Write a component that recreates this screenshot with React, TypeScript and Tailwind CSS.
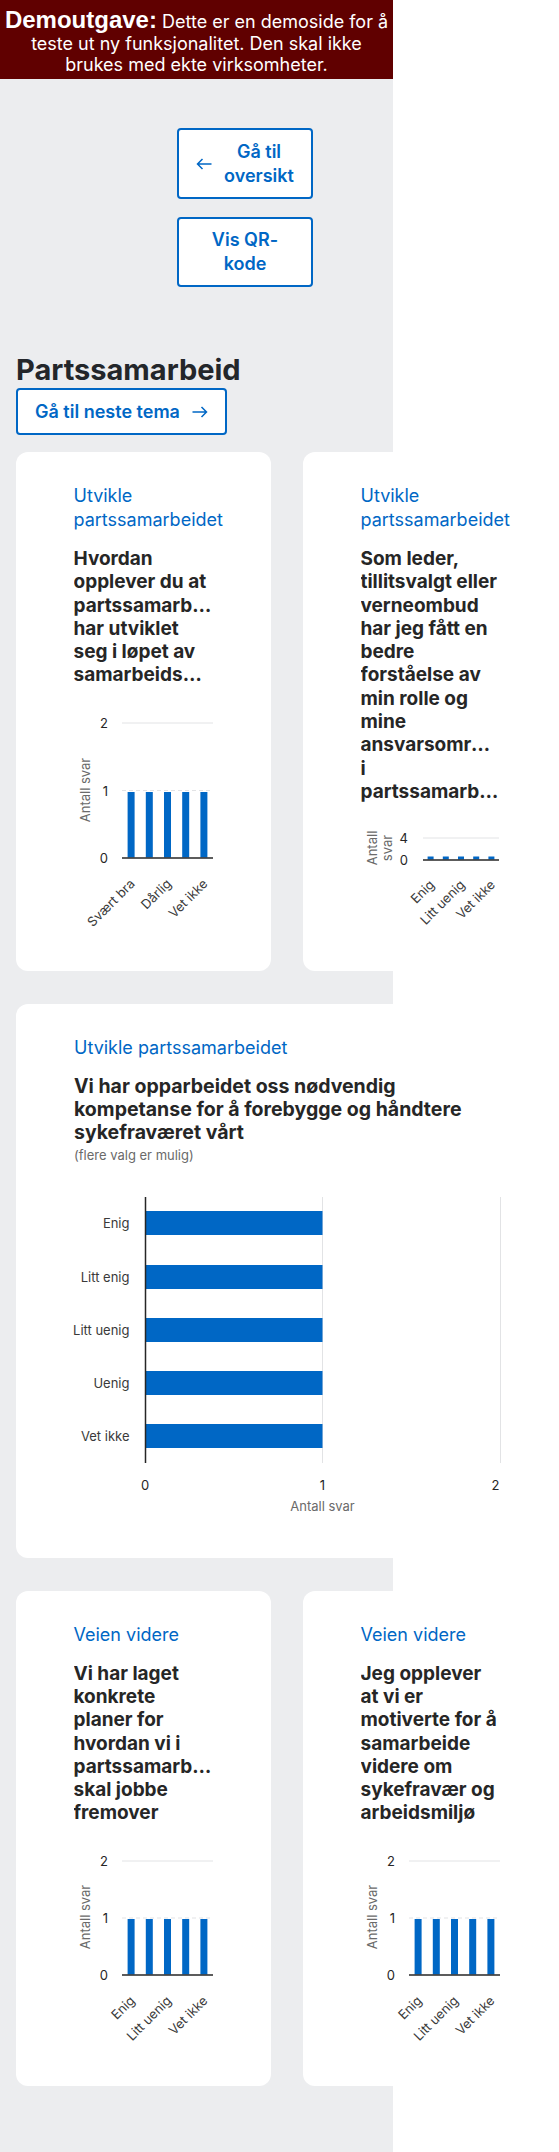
import React from "react";

type Grid = { y: number; label: string; kind: "solid" | "dash" | "base" };

type VChartProps = {
  h: number;
  left: number;
  right: number;
  grid: Grid[];
  barTop: number;
  barBottom: number;
  barW: number;
  labels: string[];
  title: string[];
  titleX: number[];
  titleY: number;
  tickX: number;
  labelY: number;
};

function VChart({
  h,
  left,
  right,
  grid,
  barTop,
  barBottom,
  barW,
  labels,
  title,
  titleX,
  titleY,
  tickX,
  labelY,
}: VChartProps) {
  const band = (right - left) / labels.length;
  const base = grid.find((g) => g.kind === "base");
  return (
    <svg width={139} height={h} className="block overflow-visible" fontFamily="Inter, sans-serif">
      {grid
        .filter((g) => g.kind !== "base")
        .map((g) => (
          <line
            key={g.y}
            x1={left}
            x2={right}
            y1={g.y}
            y2={g.y}
            stroke="#e2e3e5"
            strokeWidth={1}
            strokeDasharray={g.kind === "dash" ? "4 3" : undefined}
          />
        ))}
      {grid.map((g) => (
        <text key={"t" + g.y} x={tickX} y={g.y} textAnchor="end" dominantBaseline="central" fontSize={13} fill="#262626">
          {g.label}
        </text>
      ))}
      {labels.map((_, i) => (
        <rect
          key={"b" + i}
          x={left + band * (i + 0.5) - barW / 2}
          y={barTop}
          width={barW}
          height={barBottom - barTop}
          fill="#0067c5"
        />
      ))}
      {base && <line x1={left} x2={right} y1={base.y} y2={base.y} stroke="#262626" strokeWidth={1.5} />}
      {labels.map((l, i) =>
        l ? (
          <text
            key={"l" + i}
            transform={`translate(${left + band * (i + 0.5) + 1},${labelY}) rotate(-45)`}
            textAnchor="end"
            dominantBaseline="central"
            fontSize={13}
            fill="#3a3a3a"
          >
            {l}
          </text>
        ) : null
      )}
      {title.map((t, i) => (
        <text
          key={"ti" + i}
          transform={`translate(${titleX[i]},${titleY}) rotate(-90)`}
          textAnchor="middle"
          dominantBaseline="central"
          fontSize={13}
          fill="#6a6a6a"
        >
          {t}
        </text>
      ))}
    </svg>
  );
}

function HChart() {
  const rows = ["Enig", "Litt enig", "Litt uenig", "Uenig", "Vet ikke"];
  const tops = [47, 101, 154, 207, 260];
  return (
    <svg width={426} height={362} className="block overflow-visible" fontFamily="Inter, sans-serif">
      <line x1={248.5} x2={248.5} y1={33} y2={299} stroke="#e2e3e5" />
      <line x1={426.5} x2={426.5} y1={33} y2={299} stroke="#e2e3e5" />
      {rows.map((r, i) => (
        <g key={r}>
          <rect x={71.5} y={tops[i]} width={177} height={24} fill="#0067c5" />
          <text x={55.5} y={tops[i] + 12} textAnchor="end" dominantBaseline="central" fontSize={13} fill="#3a3a3a">
            {r}
          </text>
        </g>
      ))}
      <line x1={71.5} x2={71.5} y1={33} y2={299} stroke="#262626" strokeWidth={1.5} />
      <text x={71} y={321} textAnchor="middle" dominantBaseline="central" fontSize={13} fill="#262626">0</text>
      <text x={248.5} y={321} textAnchor="middle" dominantBaseline="central" fontSize={13} fill="#262626">1</text>
      <text x={421.5} y={321} textAnchor="middle" dominantBaseline="central" fontSize={13} fill="#262626">2</text>
      <text x={248.5} y={342} textAnchor="middle" dominantBaseline="central" fontSize={13} fill="#6a6a6a">
        Antall svar
      </text>
    </svg>
  );
}

const chartLarge = {
  h: 252,
  left: 48,
  right: 139,
  grid: [
    { y: 36, label: "2", kind: "solid" },
    { y: 103.5, label: "1", kind: "dash" },
    { y: 171, label: "0", kind: "base" },
  ] as Grid[],
  barTop: 105,
  barBottom: 170.5,
  barW: 7,
  title: ["Antall svar"],
  titleX: [11],
  titleY: 103,
  tickX: 34,
  labelY: 194,
};

const chartSmall = {
  h: 229,
  left: 48,
  right: 139,
  grid: [
    { y: 36, label: "2", kind: "solid" },
    { y: 93, label: "1", kind: "dash" },
    { y: 150, label: "0", kind: "base" },
  ] as Grid[],
  barTop: 94,
  barBottom: 149.5,
  barW: 7,
  title: ["Antall svar"],
  titleX: [11],
  titleY: 92,
  tickX: 34,
  labelY: 173,
};

const chartTiny = {
  h: 135,
  left: 62,
  right: 138,
  grid: [
    { y: 35, label: "4", kind: "solid" },
    { y: 57, label: "0", kind: "base" },
  ] as Grid[],
  barTop: 53.5,
  barBottom: 56.5,
  barW: 6,
  title: ["Antall", "svar"],
  titleX: [11, 26],
  titleY: 45,
  tickX: 47,
  labelY: 79,
};

function Card({ theme, question, children }: { theme: string; question: string; children: React.ReactNode }) {
  return (
    <div className="rounded-xl bg-white py-8">
      <div className="mx-auto w-[140px]">
        <p className="text-[18px] leading-6 text-[#0067c5]">{theme}</p>
        <h3 className="mt-[15px] overflow-hidden text-ellipsis text-[19px] font-bold leading-[23.3px] text-[#262626]">
          {question}
        </h3>
        {children}
      </div>
    </div>
  );
}

function ArrowLeft() {
  return (
    <svg width="16" height="12" viewBox="0 0 16 12" fill="none" stroke="currentColor" strokeWidth="1.5">
      <path d="M15.5 6H1.5M6.5 1L1.5 6L6.5 11" />
    </svg>
  );
}

function ArrowRight() {
  return (
    <svg width="16" height="12" viewBox="0 0 16 12" fill="none" stroke="currentColor" strokeWidth="1.5">
      <path d="M0.5 6H14.5M9.5 1L14.5 6L9.5 11" />
    </svg>
  );
}

export default function App() {
  const fiveA = ["Svært bra", "", "Dårlig", "", "Vet ikke"];
  const fiveB = ["Enig", "", "Litt uenig", "", "Vet ikke"];

  return (
    <div className="min-h-screen w-[393px] bg-[#ecedef] font-['Inter',sans-serif] text-[#23262a]">
      {/* Demo banner */}
      <div className="h-[79px] bg-[#600000] pt-[9px] text-center text-[18px] leading-[21.5px] whitespace-nowrap text-white">
        <span className="font-['Liberation_Sans',Arial,sans-serif] text-[24px] font-bold leading-[21.5px]">Demoutgave:</span>{" "}
        Dette er en demoside for å
        <br />
        teste ut ny funksjonalitet. Den skal ikke
        <br />
        brukes med ekte virksomheter.
      </div>

      <div className="px-4 pb-16">
        {/* Top actions */}
        <div className="flex flex-col gap-[18px] pl-[161px] pt-[49px]">
          <button className="flex w-[136px] items-center justify-center gap-3 rounded border-2 border-[#0067c5] bg-white px-[16px] py-[9.5px] text-[18px] font-semibold leading-6 text-[#0067c5]">
            <ArrowLeft />
            <span className="text-center">
              Gå til
              <br />
              oversikt
            </span>
          </button>
          <button className="w-[136px] rounded border-2 border-[#0067c5] bg-white px-4 py-[9px] text-center text-[18px] font-semibold leading-6 text-[#0067c5]">
            Vis QR-kode
          </button>
        </div>

        <h1 className="mt-[65px] text-[29px] font-bold leading-9 text-[#23262a]">Partssamarbeid</h1>
        <button className="flex h-[47px] items-center gap-3 rounded border-2 border-[#0067c5] bg-white pl-[17px] pr-[17px] text-[18px] font-semibold leading-6 text-[#0067c5]">
          Gå til neste tema
          <ArrowRight />
        </button>

        {/* Question cards */}
        <div className="mt-[17px] grid grid-cols-[255px_255px] gap-x-8 gap-y-[33px]">
          <Card
            theme="Utvikle partssamarbeidet"
            question="Hvordan opplever du at partssamarbeidet har utviklet seg i løpet av samarbeidsperioden?"
          >
            <VChart {...chartLarge} labels={fiveA} />
          </Card>
          <Card
            theme="Utvikle partssamarbeidet"
            question="Som leder, tillitsvalgt eller verneombud har jeg fått en bedre forståelse av min rolle og mine ansvarsområder i partssamarbeidet"
          >
            <VChart {...chartTiny} labels={fiveB} />
          </Card>

          <div className="col-span-2 rounded-xl bg-white px-[58px] py-8">
            <p className="text-[18px] leading-6 text-[#0067c5]">Utvikle partssamarbeidet</p>
            <h3 className="mt-[15px] max-w-[410px] text-[19.5px] font-bold leading-[23.3px] text-[#262626]">
              Vi har opparbeidet oss nødvendig kompetanse for å forebygge og håndtere sykefraværet vårt
            </h3>
            <p className="mt-[1px] text-[13px] leading-[18px] text-[#6a6a6a]">(flere valg er mulig)</p>
            <HChart />
          </div>

          <Card
            theme="Veien videre"
            question="Vi har laget konkrete planer for hvordan vi i partssamarbeidet skal jobbe fremover"
          >
            <VChart {...chartSmall} labels={fiveB} />
          </Card>
          <Card
            theme="Veien videre"
            question="Jeg opplever at vi er motiverte for å samarbeide videre om sykefravær og arbeidsmiljø"
          >
            <VChart {...chartSmall} labels={fiveB} />
          </Card>
        </div>
      </div>
    </div>
  );
}
